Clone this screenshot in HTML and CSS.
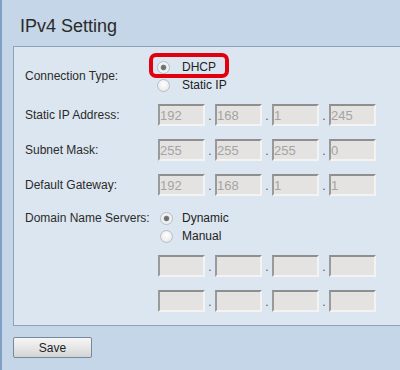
FILE: index.html
```html
<!DOCTYPE html>
<html>
<head>
<meta charset="utf-8">
<title>IPv4 Setting</title>
<link rel="stylesheet" href="styles.css">
</head>
<body>
<div class="page">
  <h1 class="title">IPv4 Setting</h1>
  <form class="panel">
    <div class="row row-radios">
      <div class="label label-mid">Connection Type:</div>
      <div class="radios">
        <span class="highlight"></span>
        <label class="opt"><input type="radio" name="ct" checked><span>DHCP</span></label>
        <label class="opt"><input type="radio" name="ct"><span>Static IP</span></label>
      </div>
    </div>
    <div class="row">
      <div class="label">Static IP Address:</div>
      <div class="ip">
        <input class="oct" disabled value="192"><span class="sep">.</span><input class="oct" disabled value="168"><span class="sep">.</span><input class="oct" disabled value="1"><span class="sep">.</span><input class="oct" disabled value="245">
      </div>
    </div>
    <div class="row">
      <div class="label">Subnet Mask:</div>
      <div class="ip">
        <input class="oct" disabled value="255"><span class="sep">.</span><input class="oct" disabled value="255"><span class="sep">.</span><input class="oct" disabled value="255"><span class="sep">.</span><input class="oct" disabled value="0">
      </div>
    </div>
    <div class="row">
      <div class="label">Default Gateway:</div>
      <div class="ip">
        <input class="oct" disabled value="192"><span class="sep">.</span><input class="oct" disabled value="168"><span class="sep">.</span><input class="oct" disabled value="1"><span class="sep">.</span><input class="oct" disabled value="1">
      </div>
    </div>
    <div class="row row-radios row-top">
      <div class="label label-line">Domain Name Servers:</div>
      <div class="radios radios-dns">
        <label class="opt"><input type="radio" name="dns" checked><span>Dynamic</span></label>
        <label class="opt"><input type="radio" name="dns"><span>Manual</span></label>
      </div>
    </div>
    <div class="row">
      <div class="label"></div>
      <div class="ip">
        <input class="oct" disabled value=""><span class="sep">.</span><input class="oct" disabled value=""><span class="sep">.</span><input class="oct" disabled value=""><span class="sep">.</span><input class="oct" disabled value="">
      </div>
    </div>
    <div class="row">
      <div class="label"></div>
      <div class="ip">
        <input class="oct" disabled value=""><span class="sep">.</span><input class="oct" disabled value=""><span class="sep">.</span><input class="oct" disabled value=""><span class="sep">.</span><input class="oct" disabled value="">
      </div>
    </div>
  </form>
  <button class="save" type="button">Save</button>
</div>
</body>
</html>
```
FILE: styles.css
```css
html, body {
  margin: 0;
  padding: 0;
}
body {
  background: #c4d6e7;
  font-family: "Liberation Sans", Arial, sans-serif;
  font-size: 12px;
  color: #2b2b2b;
  overflow: hidden;
}
.page {
  border-left: 2px solid #7f9fc4;
  min-height: 370px;
  box-sizing: border-box;
}
.title {
  margin: 0 0 9px 0;
  padding: 15px 0 0 18px;
  font-size: 18px;
  line-height: 22px;
  font-weight: normal;
  color: #2a2a2a;
}
.panel {
  margin: 0 0 0 11px;
  background: #dce6f0;
  border: 1px solid #8fa3b6;
  border-right: none;
  padding: 11px 0 13px 11px;
  display: flex;
  flex-direction: column;
  gap: 13px;
}
.row {
  display: flex;
  align-items: center;
}
.row-top {
  align-items: flex-start;
}
.row-radios {
  margin-bottom: -3px;
}
.label {
  width: 133px;
  flex: none;
  line-height: 18px;
}
.radios {
  position: relative;
  display: flex;
  flex-direction: column;
}
.opt {
  display: flex;
  align-items: center;
  height: 18px;
  line-height: 18px;
  color: #222;
}
.opt input {
  -webkit-appearance: none;
  appearance: none;
  width: 13px;
  height: 13px;
  margin: 0 12px 0 -1px;
  border-radius: 50%;
  border: 1px solid #b9bdc2;
  background: radial-gradient(circle at 50% 40%, #ffffff 0, #eceeef 60%, #dcdfe2 100%);
  box-sizing: border-box;
}
.opt input:checked {
  background: radial-gradient(circle at 50% 50%, #5f6366 0, #7b7f83 2.4px, #e9ebed 3.2px, #f3f4f5 60%, #dcdfe2 100%);
}
.radios-dns .opt input {
  margin-left: 2px;
  margin-right: 9px;
}
.highlight {
  position: absolute;
  left: -9px;
  top: -5px;
  width: 80px;
  height: 25px;
  box-sizing: border-box;
  border: 4px solid #e3000e;
  border-radius: 7px;
}
.ip {
  display: flex;
  align-items: baseline;
}
.oct {
  -webkit-appearance: none;
  appearance: none;
  width: 47px;
  height: 22px;
  box-sizing: border-box;
  margin: 0;
  padding: 0;
  border-top: 2px solid #8f8f8f;
  border-left: 2px solid #9a9a9a;
  border-right: 2px solid #f3f3f3;
  border-bottom: 2px solid #f3f3f3;
  background: #e5e3e1;
  font-family: "Liberation Sans", Arial, sans-serif;
  font-size: 13px;
  color: #a4a4a4;
  -webkit-text-fill-color: #a4a4a4;
  opacity: 1;
}
.sep {
  width: 10px;
  text-align: center;
  color: #555;
  font-size: 12px;
}
.save {
  display: block;
  margin: 11px 0 0 11px;
  width: 79px;
  height: 21px;
  padding: 0;
  border: 1px solid #76889a;
  border-radius: 2px;
  background: linear-gradient(#f6f6f6, #e6e6e6 50%, #d2d4d6);
  font-family: "Liberation Sans", Arial, sans-serif;
  font-size: 12px;
  color: #1e1e1e;
}
```
